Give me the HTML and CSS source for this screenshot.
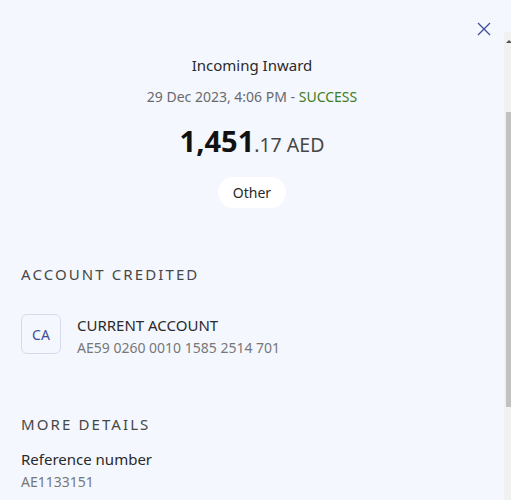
FILE: index.html
```html
<!DOCTYPE html>
<html>
<head>
<meta charset="utf-8">
<link rel="stylesheet" href="styles.css">
</head>
<body>
<div class="panel">
  <header class="topbar">
    <button class="close" aria-label="Close">
      <svg width="14" height="14" viewBox="0 0 14 14"><path d="M1 1L13 13M13 1L1 13" stroke="#3d4f9a" stroke-width="1.3" fill="none"/></svg>
    </button>
  </header>
  <div class="content">
    <section class="summary">
      <div class="title">Incoming Inward</div>
      <div class="meta">29 Dec 2023, 4:06 PM - <span class="status">SUCCESS</span></div>
      <div class="amount"><span class="whole">1,451</span><span class="frac">.17 AED</span></div>
      <div class="tag">Other</div>
    </section>
    <section class="block">
      <h2 class="label">ACCOUNT CREDITED</h2>
      <div class="account">
        <div class="avatar">CA</div>
        <div class="acc-text">
          <div class="acc-name">CURRENT ACCOUNT</div>
          <div class="acc-num">AE59 0260 0010 1585 2514 701</div>
        </div>
      </div>
    </section>
    <section class="block more">
      <h2 class="label">MORE DETAILS</h2>
      <div class="field-name">Reference number</div>
      <div class="field-val">AE1133151</div>
    </section>
  </div>
  <div class="scrollbar"><div class="arrow"></div><div class="thumb"></div></div>
</div>
</body>
</html>
```
FILE: styles.css
```css
html, body { margin: 0; padding: 0; }
body {
  background: #f4f7fe;
  font-family: "Noto Sans", "Open Sans", sans-serif;
  color: #222;
  overflow: hidden;
  height: 500px;
}
.panel { position: relative; width: 511px; height: 500px; }
.topbar { height: 32px; display: flex; justify-content: flex-end; }
.close {
  border: 0; background: none; padding: 0;
  width: 14px; height: 14px;
  margin: 22px 20px 0 0;
  cursor: pointer;
}
.close svg { display: block; }
.content { padding: 0 21px; }
.summary { display: flex; flex-direction: column; align-items: center; padding-right: 7px; }
.title { font-size: 15px; line-height: 20px; margin-top: 23px; color: #2a2a2a; }
.meta { font-size: 14px; line-height: 20px; margin-top: 12px; color: #6a6a6a; }
.status { color: #3e7d1f; }
.amount { margin-top: 16px; line-height: 36px; }
.whole { font-size: 29px; font-weight: 700; color: #111; }
.frac { font-size: 19.5px; color: #474747; }
.tag {
  margin-top: 13px;
  background: #fff;
  border-radius: 16px;
  height: 31px; line-height: 31px;
  padding: 0 15px;
  font-size: 14px;
  color: #2a2a2a;
}
.label {
  margin: 0;
  font-size: 15px;
  font-weight: 400;
  letter-spacing: 2.1px;
  color: #474747;
  line-height: 20px;
}
.block { margin-top: 56px; }
.account { display: flex; align-items: flex-start; gap: 16px; margin-top: 30px; }
.avatar {
  width: 38px; height: 38px;
  border: 1px solid #d6dbec;
  border-radius: 6px;
  display: flex; align-items: center; justify-content: center;
  font-size: 14px; color: #3d4f9a;
}
.acc-text { margin-top: 1px; }
.acc-name { font-size: 15px; line-height: 20px; color: #2a2a2a; }
.acc-num { font-size: 14px; line-height: 20px; margin-top: 3px; color: #777; }
.more { margin-top: 56px; }
.field-name { font-size: 15px; line-height: 20px; margin-top: 15px; color: #2a2a2a; }
.field-val { font-size: 14px; line-height: 20px; margin-top: 3px; color: #777; }
.scrollbar {
  position: absolute; right: 0; top: 32px; bottom: 0;
  width: 7px; background: #f1f1f1;
}
.arrow {
  position: absolute; left: 2px; top: 8px;
  width: 0; height: 0;
  border-left: 3px solid transparent; border-right: 3px solid transparent;
  border-bottom: 3px solid #505050;
}
.thumb {
  position: absolute; left: 2px; right: 0; top: 80px; height: 295px;
  background: #c1c1c1;
}
```
